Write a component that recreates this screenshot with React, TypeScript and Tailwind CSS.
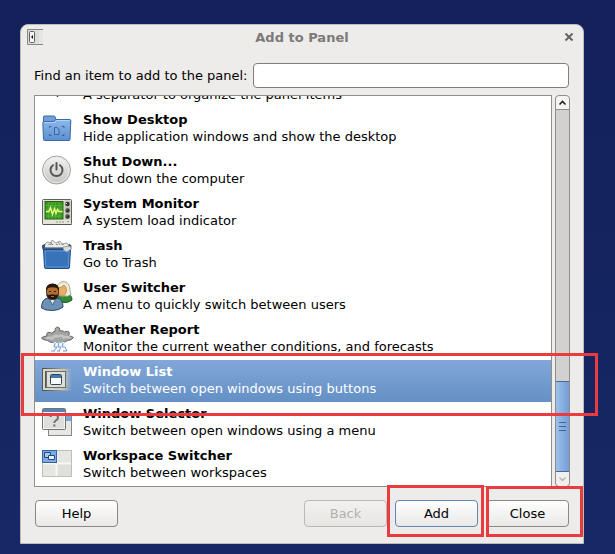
import { useState } from "react";
import type { ReactNode } from "react";
import clsx from "clsx";

interface PanelItem {
  name?: string;
  description: string;
  icon: ReactNode;
}

function SeparatorIcon() {
  return (
    <svg width="32" height="32" viewBox="0 0 32 32">
      <path d="M16.5 2v24" stroke="#333" strokeWidth="1.4" />
    </svg>
  );
}

function DesktopIcon() {
  return (
    <svg width="32" height="32" viewBox="0 0 32 32">
      <defs>
        <linearGradient id="folder" x1="0" y1="0" x2="0" y2="1">
          <stop offset="0" stopColor="#8db8e8" />
          <stop offset="1" stopColor="#5b8fd0" />
        </linearGradient>
      </defs>
      <path d="M2.5 7V5q0-1 1-1h9.500q1 0 1.500 2l.5 2h13q1.500 0 1.500 1.500V12h-27z" fill="#6f9fd9" stroke="#3b69a5" />
      <path d="M1.800 10.500q0-1 1-1h10l2-2h14q1 0 1 1L29 27.500q0 1-1 1H3.500q-1 0-1-1z" fill="url(#folder)" stroke="#3b69a5" />
      <path d="M3.500 10.500h10l2-2h13" fill="none" stroke="#b5d2f2" />
      <path d="M8.500 16v-1.500h2M8.500 22v1.500h2M21 14.500h2V16M21 23.500h2V22" fill="none" stroke="#34629f" />
      <path d="M13.500 15.500h2.500l2 2v5h-4.500z" fill="#79a8df" stroke="#34629f" />
    </svg>
  );
}

function ShutDownIcon() {
  return (
    <svg width="32" height="32" viewBox="0 0 32 32">
      <defs>
        <linearGradient id="power" x1="0" y1="0" x2="0" y2="1">
          <stop offset="0" stopColor="#f3f3f1" />
          <stop offset="1" stopColor="#c4c4c1" />
        </linearGradient>
      </defs>
      <circle cx="15.500" cy="16" r="14" fill="url(#power)" stroke="#a2a29f" />
      <circle cx="15.500" cy="16" r="12.700" fill="none" stroke="#e9e9e7" />
      <path d="M12 11.200a6 6 0 1 0 7 0" fill="none" stroke="#555753" strokeWidth="2" strokeLinecap="round" />
      <path d="M15.500 9v6.500" stroke="#555753" strokeWidth="2" strokeLinecap="round" />
    </svg>
  );
}

function MonitorIcon() {
  return (
    <svg width="32" height="32" viewBox="0 0 32 32">
      <rect x="1.500" y="3.500" width="29" height="25" rx="1" fill="#e4e4d8" stroke="#62625c" />
      <path d="M2 28.500h28.500" stroke="#55554f" />
      <rect x="4" y="5.500" width="18" height="17.500" fill="#3c9a22" stroke="#235c14" />
      <path d="M7.500 6v17M11 6v17M14.500 6v17M18 6v17M4.500 9.500h17M4.500 13h17M4.500 16.500h17M4.500 20h17" stroke="#5bb93c" strokeWidth=".6" />
      <path d="M5 15.500h3l1.500-4 2 7 2-6 1.500 5 1.500-4 1.500 2h3.500" fill="none" stroke="#e6ff80" strokeWidth="1.400" />
      <rect x="23.500" y="4.500" width="6" height="19" fill="#c4c3b9" />
      <circle cx="26.500" cy="8" r="2.200" fill="#31332f" />
      <circle cx="26.500" cy="14.500" r="2.200" fill="#31332f" />
      <circle cx="26.500" cy="20.500" r="2.200" fill="#31332f" />
      <path d="M25 8l1-1M25 14.500l1-1M25 20.500l1-1" stroke="#ddd" />
      <path d="M15 26h8M26 25.500h2" stroke="#999990" strokeDasharray="2 1" />
    </svg>
  );
}

function TrashIcon() {
  return (
    <svg width="32" height="32" viewBox="0 0 32 32">
      <path d="M2 8l4-4 4 1 1-3 4 3 4-2 2 3 5-1 4 5-2 4H3z" fill="#e6e6e3" stroke="#8d908b" strokeWidth=".8" />
      <path d="M7 7l4-1 2 3 3-3 2 3 4-3 2 4M9 4l3 3M17 4l2 3" fill="none" stroke="#777b76" strokeWidth=".8" />
      <path d="M1.500 7.500L4 6.500v3h24V6.500l2 1-.5 4H2z" fill="#405f83" stroke="#24466f" />
      <path d="M4 7h20v2.500H4z" fill="#e9e9e6" />
      <path d="M2.500 11.500h27L28.500 29q0 1.500-1.500 1.500H5Q3.500 30.500 3.500 29z" fill="#3872b8" stroke="#204a87" />
      <path d="M4 13h24l-.8 16h-22.400z" fill="none" stroke="#5f96d3" />
      <path d="M22 9l7-1 1.500 3-5 3-3-2z" fill="#d5dad8" stroke="#86918f" strokeWidth=".7" />
    </svg>
  );
}

function UserSwitcherIcon() {
  return (
    <svg width="32" height="32" viewBox="0 0 32 32">
      <path d="M14 21q0-6 5-7h6q6 0 6 6-3 2.500-7 2.500T14 21z" fill="#2e8b36" stroke="#18581d" />
      <path d="M15 14q0-12 7-12.500 7 0 7 9l1 4q-3 2.500-6 1.500-5 1-9-2z" fill="#eeeed7" stroke="#97978a" strokeWidth=".8" />
      <path d="M17 8q3 0 6-3 3 2 2.500 6-1 5-4.500 5t-4-8z" fill="#e9ad6a" stroke="#ad7134" strokeWidth=".6" />
      <path d="M0.500 28q0-9 6.500-10h9q6 1 6 9-4 3.500-11 3.500T.5 28z" fill="#6d91b5" stroke="#294767" />
      <path d="M8 18l3.500 7 3.500-7" fill="#e4edf4" stroke="#35577a" strokeWidth=".8" />
      <path d="M5.500 11q0-6 6-6t6 6v2q0 6.500-6 6.500t-6-6.500z" fill="#b36d2d" stroke="#3b1f10" strokeWidth=".8" />
      <path d="M5 11Q4.500 3.500 11.500 3.500T18 11l-2-3q-4.500-1.500-9 0z" fill="#241814" />
      <path d="M8 11.500h2M13 11.500h2" stroke="#3b1f10" />
      <path d="M5.800 14q1.500 1.500 3 .8 2.700-1 5.400 0 1.500.7 3-.8-.5 5.500-5.700 5.500T5.800 14z" fill="#261611" />
      <path d="M10 16.500h3" stroke="#a96a45" />
    </svg>
  );
}

function WeatherIcon() {
  return (
    <svg width="34" height="32" viewBox="0 0 34 32">
      <path
        d="M.5 16q2-2 5.500-2-1-3 1-3.500 3-.5 4 1 .5-2 3-2 0-4.500 2.500-4.500T19 9q3-1 4.500 1 3-1.500 4.500 0 1 2-1 4 4 0 5.500 1.500-1 2.500-6 3-2 2-6 2H12q-4 0-5-2-5-.5-6.500-2.500z"
        fill="#a4a6a3"
        stroke="#656764"
      />
      <path d="M5 16.500q4-1.500 6 0 3-4 6-2 4-2 6 1 3-1.500 6 .5" fill="none" stroke="#c3c5c2" strokeWidth="2.500" />
      <path d="M14 20v4M18 20v5M22 20v4" fill="none" stroke="#e5f1ff" strokeWidth="3" />
      <path d="M14 21l-1 4h3l-3 4M18 20l-1 5h3l-2 4M22 21l-1 4h3l2 4M10 29h4M16 29h3M22 29h4" fill="none" stroke="#709ccd" />
    </svg>
  );
}

function WindowListIcon() {
  return (
    <svg width="32" height="32" viewBox="0 0 32 32">
      <defs>
        <linearGradient id="bar" x1="0" y1="0" x2="1" y2="0">
          <stop offset="0" stopColor="#d9dad0" />
          <stop offset=".7" stopColor="#c5cabf" />
          <stop offset="1" stopColor="#c5cabf" stopOpacity="0" />
        </linearGradient>
        <linearGradient id="edge" x1="0" y1="0" x2="1" y2="0">
          <stop offset="0" stopColor="#454841" />
          <stop offset="1" stopColor="#454841" stopOpacity="0" />
        </linearGradient>
      </defs>
      <rect x="1" y="4" width="30" height="23" fill="url(#bar)" />
      <path d="M1 4h30v1H1zM1 26h30v1H1zM5 7h25v1H5zM5 23h25v1H5z" fill="url(#edge)" />
      <path d="M1.500 4v23M4.500 7v17" stroke="#555850" />
      <rect x="5.500" y="7.500" width="19" height="16" fill="#dedfd7" stroke="#6c6f68" />
      <rect x="9.500" y="10.500" width="11" height="10" rx="1" fill="#f7f8fa" stroke="#30465f" />
      <path d="M10 11h10v3H10z" fill="#4775af" />
    </svg>
  );
}

function WindowSelectorIcon() {
  return (
    <svg width="32" height="32" viewBox="0 0 32 32">
      <rect x="7.500" y="9.500" width="23" height="20" fill="#e7e8e5" stroke="#888a85" />
      <path d="M8 10h22v5H8z" fill="#7ba4da" />
      <rect x="1.500" y="2.500" width="23" height="21" rx="1" fill="#dedfdc" stroke="#72746f" />
      <path d="M2 3h22v3H2z" fill="#5583bd" />
      <path d="M2.500 6.500h21v16h-21z" fill="none" stroke="#f3f4f2" />
      <path d="M9.500 11q0-2.500 3.500-2.500 4 0 4 3 0 1.800-2 2.800-1.700.8-1.700 2.700" fill="none" stroke="#72746f" strokeWidth="2" />
      <path d="M12.200 18.500h2.200v2h-2.200z" fill="#72746f" />
    </svg>
  );
}

function WorkspaceIcon() {
  return (
    <svg width="32" height="32" viewBox="0 0 32 32">
      <rect x="1.500" y="2.500" width="29" height="26" fill="#dfe0dc" stroke="#bfc0bc" />
      <path d="M16 3h14v12H16zM2 16h14v12H2z" fill="#e5e6e2" />
      <path d="M15.500 3v25M2 15.500h28" stroke="#f8f8f7" strokeWidth="2" />
      <rect x="1.500" y="2.500" width="14" height="12" fill="#80aadd" stroke="#3465a4" />
      <path d="M3.500 4.500h6v5h-6z" fill="#a9c9ee" stroke="#204a87" />
      <path d="M7.500 7.500h6v4h-6z" fill="#e9f2fc" stroke="#204a87" />
    </svg>
  );
}

const items: PanelItem[] = [
  { description: "A separator to organize the panel items", icon: <SeparatorIcon /> },
  { name: "Show Desktop", description: "Hide application windows and show the desktop", icon: <DesktopIcon /> },
  { name: "Shut Down...", description: "Shut down the computer", icon: <ShutDownIcon /> },
  { name: "System Monitor", description: "A system load indicator", icon: <MonitorIcon /> },
  { name: "Trash", description: "Go to Trash", icon: <TrashIcon /> },
  { name: "User Switcher", description: "A menu to quickly switch between users", icon: <UserSwitcherIcon /> },
  { name: "Weather Report", description: "Monitor the current weather conditions, and forecasts", icon: <WeatherIcon /> },
  { name: "Window List", description: "Switch between open windows using buttons", icon: <WindowListIcon /> },
  { name: "Window Selector", description: "Switch between open windows using a menu", icon: <WindowSelectorIcon /> },
  { name: "Workspace Switcher", description: "Switch between workspaces", icon: <WorkspaceIcon /> },
];

interface DialogButtonProps {
  children: ReactNode;
  primary?: boolean;
  disabled?: boolean;
}

function DialogButton({ children, primary, disabled }: DialogButtonProps) {
  return (
    <button
      disabled={disabled}
      className={clsx(
        "block h-[27px] w-[83px] rounded border bg-linear-to-b",
        disabled
          ? "border-[#b9b8b6] from-[#f2f1f0] to-[#e7e6e5] text-[#b3b1af]"
          : "from-white to-[#e9e8e7] text-black",
        !disabled && (primary ? "border-[#6285b3]" : "border-[#8a8987]")
      )}
    >
      {children}
    </button>
  );
}

function Scrollbar() {
  return (
    <div className="flex w-[15px] shrink-0 flex-col rounded border border-[#8f8e8b] bg-[#d3d1cf]">
      <button aria-label="Scroll up" className="flex h-[14px] items-center justify-center rounded-t border-b border-[#8f8e8b] bg-[#f5f4f3]">
        <svg width="9" height="6" viewBox="0 0 9 6">
          <path d="M1.500 4.500l3-3 3 3" fill="none" stroke="#222" strokeWidth="1.600" />
        </svg>
      </button>
      <div className="flex-1" />
      <div className="flex h-[91px] flex-col items-center justify-center gap-[3px] border-y border-[#46699b] bg-linear-to-r from-[#9fc0ea] to-[#729fd8]">
        <span className="h-px w-[7px] bg-[#3d649b]" />
        <span className="h-px w-[7px] bg-[#3d649b]" />
        <span className="h-px w-[7px] bg-[#3d649b]" />
      </div>
      <button aria-label="Scroll down" disabled className="flex h-[14px] items-center justify-center rounded-b bg-[#f1f0ef]">
        <svg width="9" height="6" viewBox="0 0 9 6">
          <path d="M1.500 1.500l3 3 3-3" fill="none" stroke="#b5b3b0" strokeWidth="1.400" />
        </svg>
      </button>
    </div>
  );
}

export default function App() {
  const [selected, setSelected] = useState("Window List");
  const [query, setQuery] = useState("");

  return (
    <div className="min-h-screen bg-linear-to-b from-[#14215a] via-[#14245f] to-[#182866] pt-6 pr-[31px] pb-[10px] pl-5 font-['DejaVu_Sans',sans-serif] text-[13px] leading-[17px] text-black">
      <div className="rounded-t-lg border border-[#bdbbb8] bg-[#edeceb] px-[13px] pb-4">
        {/* Title bar */}
        <header className="flex h-6 items-center justify-between">
          <svg width="16" height="16" viewBox="0 0 16 16" className="-ml-[7px]">
            <path d="M1 .5h15v15H1z" fill="#dcdfd9" />
            <path d="M16 .5H.5v15H16" fill="none" stroke="#858982" />
            <rect x="2.500" y="2.500" width="5" height="11" rx="1" fill="#f5f5f3" stroke="#5f625c" />
            <path d="M6 6v4L4 8z" fill="#111" />
            <path d="M12 1h4v14h-4z" fill="#edeceb" opacity=".6" />
          </svg>
          <h1 className="font-bold text-[#7b7a78]">Add to Panel</h1>
          <button aria-label="Close window" className="-mr-[7px] flex h-4 w-4 items-center justify-center">
            <svg width="10" height="10" viewBox="0 0 10 10">
              <path d="M1.500 1.500l7 7M8.500 1.500l-7 7" stroke="#666563" strokeWidth="2" />
            </svg>
          </button>
        </header>

        <div className="mt-3.5 mr-px flex items-center gap-[5px]">
          <label htmlFor="find-item" className="shrink-0">
            Find an item to add to the panel:
          </label>
          <input
            id="find-item"
            type="text"
            value={query}
            onChange={(e) => setQuery(e.target.value)}
            className="h-[25px] min-w-0 flex-1 rounded border border-[#7f7e7b] bg-white px-1.5 outline-none"
          />
        </div>

        <div className="relative mt-[7px] flex gap-[3px]">
          {/* The list is scrolled down to its end */}
          <ul role="listbox" aria-label="Panel items" className="flex h-[392px] min-w-0 flex-1 flex-col justify-end overflow-hidden border border-[#8f8e8b] bg-white">
            {items.map((item) => (
              <li
                key={item.description}
                role="option"
                aria-selected={item.name === selected}
                onClick={() => item.name && setSelected(item.name)}
                className={clsx(
                  "flex shrink-0 items-center pt-[3px] pb-[5px] pl-1.5",
                  item.name === selected && "bg-linear-to-b from-[#82a7d8] to-[#6490c5] text-white"
                )}
              >
                <span className="w-[42px] shrink-0">{item.icon}</span>
                <span className="self-end">
                  {item.name && <strong className="block">{item.name}</strong>}
                  <span className="block">{item.description}</span>
                </span>
              </li>
            ))}
          </ul>
          <Scrollbar />
          <div className="pointer-events-none absolute top-[258px] -right-7 -left-[13px] h-[63px] border-3 border-[#e83c3f]" />
        </div>

        <footer className="mx-px mt-[13px] flex gap-2">
          <DialogButton>Help</DialogButton>
          <div className="flex-1" />
          <DialogButton disabled>Back</DialogButton>
          <div className="relative">
            <DialogButton primary>Add</DialogButton>
            <div className="pointer-events-none absolute -top-[15px] -right-1.5 -bottom-[10px] -left-2 border-3 border-[#e83c3f]" />
          </div>
          <div className="relative">
            <DialogButton>Close</DialogButton>
            <div className="pointer-events-none absolute -top-[14px] -right-[14px] -bottom-[10px] left-0 border-3 border-[#e83c3f]" />
          </div>
        </footer>
      </div>
    </div>
  );
}
